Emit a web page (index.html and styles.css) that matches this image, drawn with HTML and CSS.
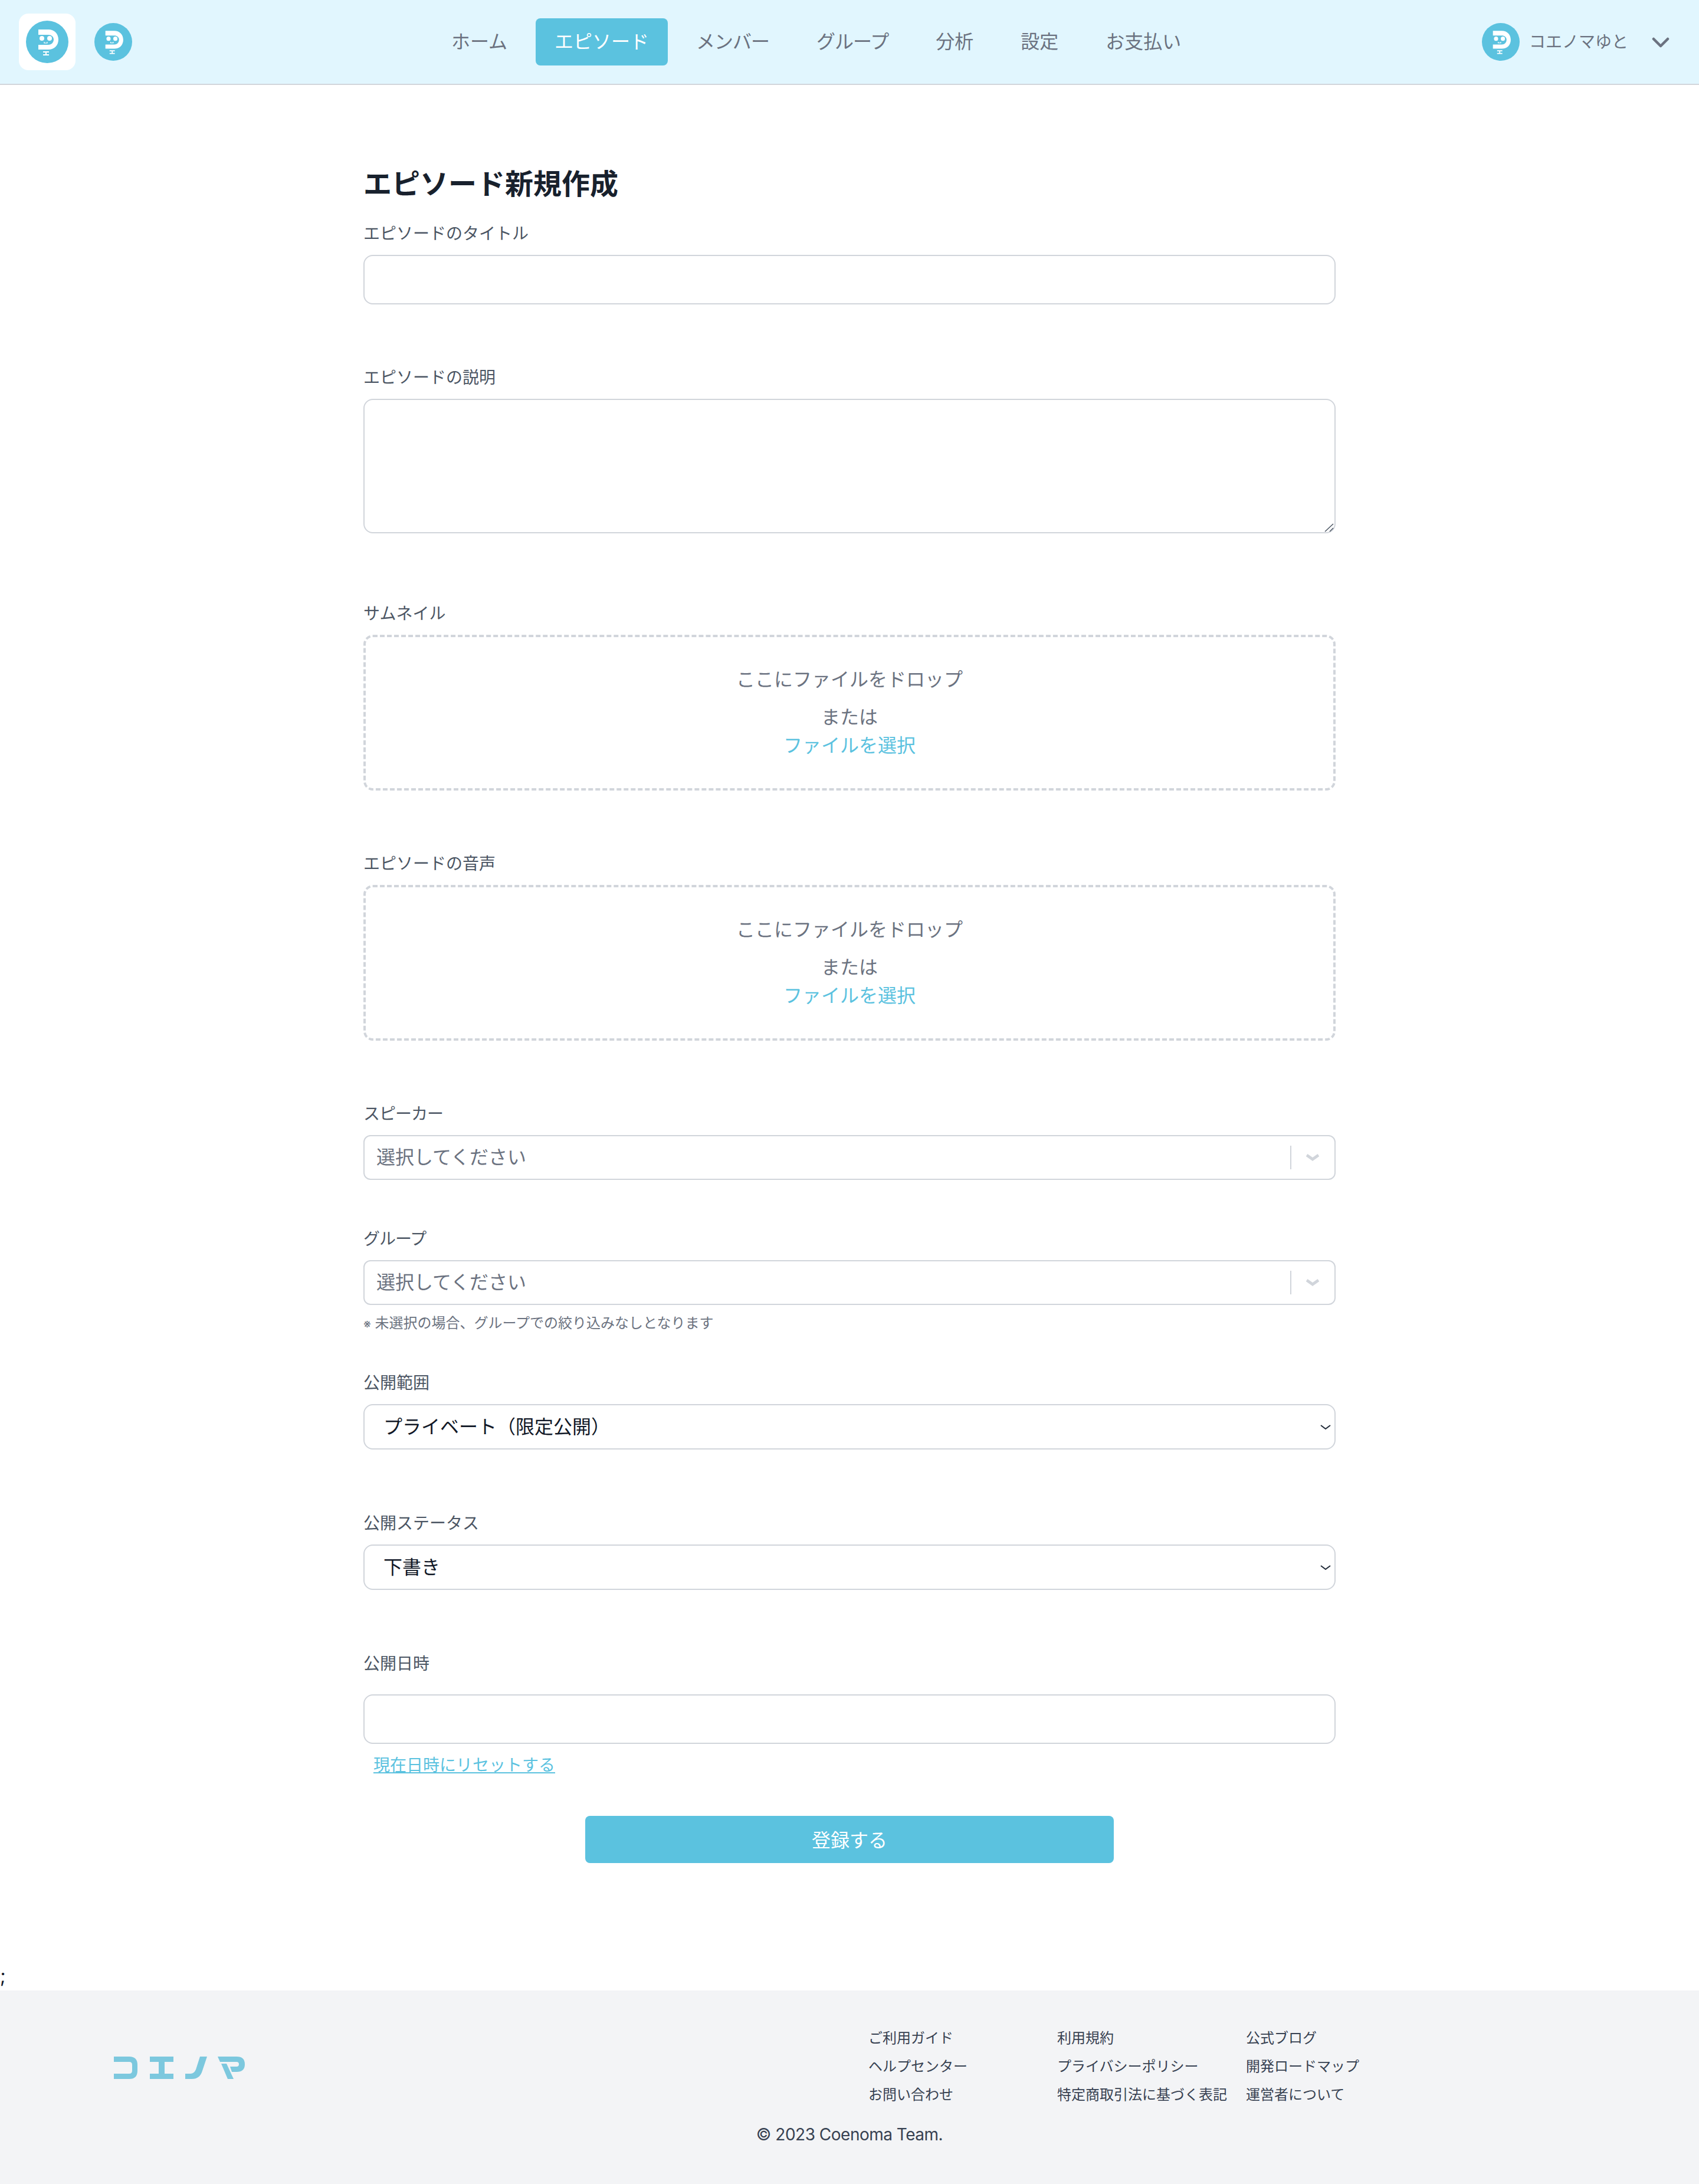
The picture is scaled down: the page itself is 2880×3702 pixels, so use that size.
FILE: index.html
```html
<!DOCTYPE html>
<html lang="ja">
<head>
  <meta charset="utf-8">
  <title>エピソード新規作成</title>
  <link rel="stylesheet" href="styles.css">
</head>
<body>
  <svg class="defs" width="0" height="0">
    <symbol id="mark" viewBox="0 0 72 72">
      <circle cx="36" cy="36" r="36" fill="#5bc2df"/>
      <path fill="#fff" d="M21 15H38C48 15 55 22 55 32C55 42 48 49 38 49H21V41H38C43 41 47 37 47 32C47 27 43 24 38 24H21Z"/>
      <circle cx="27" cy="30" r="4" fill="#fff"/>
      <circle cx="40" cy="30" r="4" fill="#fff"/>
      <path fill="none" stroke="#fff" stroke-width="1.2" d="M31 36v2h5v-2"/>
      <path fill="#fff" d="M29 52H39V54H35V57H39V59H29V57H33V54H29Z"/>
    </symbol>
  </svg>

  <header class="header">
    <div class="logo-card"><svg class="logo-card-mark"><use href="#mark"/></svg></div>
    <svg class="logo-small"><use href="#mark"/></svg>
    <nav class="nav">
      <a class="nav-item">ホーム</a>
      <a class="nav-item active">エピソード</a>
      <a class="nav-item tight">メンバー</a>
      <a class="nav-item tight">グループ</a>
      <a class="nav-item">分析</a>
      <a class="nav-item">設定</a>
      <a class="nav-item">お支払い</a>
    </nav>
    <div class="user-menu">
      <svg class="logo-small"><use href="#mark"/></svg>
      <span class="user-name">コエノマゆと</span>
      <svg class="user-chevron" viewBox="0 0 32 20"><path d="M3 3L15 15L27 3"/></svg>
    </div>
  </header>

  <main class="main">
    <h1 class="title">エピソード新規作成</h1>

    <div class="field">
      <label class="label">エピソードのタイトル</label>
      <input class="input" type="text">
    </div>

    <div class="field field-wide">
      <label class="label">エピソードの説明</label>
      <div class="textarea-wrap">
        <textarea class="textarea"></textarea>
        <svg class="textarea-grip" viewBox="0 0 16 16"><path d="M1 15L15 2M9 15L15 9"/></svg>
      </div>
    </div>

    <div class="field">
      <label class="label">サムネイル</label>
      <div class="dropzone">
        <p class="drop-text">ここにファイルをドロップ</p>
        <p class="drop-text">または</p>
        <a class="drop-link">ファイルを選択</a>
      </div>
    </div>

    <div class="field">
      <label class="label">エピソードの音声</label>
      <div class="dropzone">
        <p class="drop-text">ここにファイルをドロップ</p>
        <p class="drop-text">または</p>
        <a class="drop-link">ファイルを選択</a>
      </div>
    </div>

    <div class="field field-tight">
      <label class="label tight">スピーカー</label>
      <div class="combo">
        <span class="combo-placeholder">選択してください</span>
        <span class="combo-sep"></span>
        <svg class="combo-chevron" viewBox="0 0 22 14"><path d="M1 3L11 10L21 3"/></svg>
      </div>
    </div>

    <div class="field field-note">
      <label class="label tight">グループ</label>
      <div class="combo">
        <span class="combo-placeholder">選択してください</span>
        <span class="combo-sep"></span>
        <svg class="combo-chevron" viewBox="0 0 22 14"><path d="M1 3L11 10L21 3"/></svg>
      </div>
      <p class="note"><span class="note-mark">※</span> 未選択の場合、グループでの絞り込みなしとなります</p>
    </div>

    <div class="field field-select">
      <label class="label">公開範囲</label>
      <div class="select-wrap">
        <select class="select"><option>プライベート（限定公開）</option><option>パブリック</option></select>
        <svg class="select-chevron" viewBox="0 0 18 10"><path d="M1 2L9 8L17 2"/></svg>
      </div>
    </div>

    <div class="field field-select">
      <label class="label">公開ステータス</label>
      <div class="select-wrap">
        <select class="select"><option>下書き</option><option>公開</option></select>
        <svg class="select-chevron" viewBox="0 0 18 10"><path d="M1 2L9 8L17 2"/></svg>
      </div>
    </div>

    <div class="field-date">
      <label class="label label-date">公開日時</label>
      <input class="input" type="text">
      <a class="reset-link">現在日時にリセットする</a>
    </div>

    <button class="submit" type="button">登録する</button>
  </main>

  <div class="stray">;</div>

  <footer class="footer">
    <div class="footer-top">
      <svg class="footer-logo" viewBox="0 0 222 38">
        <path d="M0 0H26Q40 0 40 14V24Q40 38 26 38H0V29H26Q31 29 31 24V14Q31 9 26 9H0Z"/>
        <path d="M61 0H101V9H86V29H101V38H61V29H76V9H61Z"/>
        <path d="M121 38V29H130Q136 29 139 22L146 0H158L150 24Q146 38 132 38Z"/>
        <path d="M176 0H208Q222 0 222 13Q222 26 208 26H200L197 17H208Q212 17 212 13Q212 9 208 9H180Z"/>
        <path d="M182 12H191L203 38H193Z"/>
      </svg>
      <div class="footer-links">
        <a>ご利用ガイド</a>
        <a>利用規約</a>
        <a>公式ブログ</a>
        <a>ヘルプセンター</a>
        <a>プライバシーポリシー</a>
        <a>開発ロードマップ</a>
        <a>お問い合わせ</a>
        <a>特定商取引法に基づく表記</a>
        <a>運営者について</a>
      </div>
    </div>
    <p class="copyright">© 2023 Coenoma Team.</p>
  </footer>
</body>
</html>
```

FILE: styles.css
```css
* {
  box-sizing: border-box;
}
body {
  margin: 0;
  font-family: Inter, "Noto Sans CJK JP", sans-serif;
  color: #111827;
  background: #fff;
}
a {
  display: block;
}
.defs {
  position: absolute;
}

/* header */
.header {
  display: flex;
  align-items: center;
  height: 144px;
  padding: 0 48px 0 32px;
  background: #e1f6fe;
  border-bottom: 2px solid #d1d5db;
}
.logo-card {
  display: flex;
  align-items: center;
  justify-content: center;
  width: 96px;
  height: 96px;
  background: #fff;
  border-radius: 16px;
  margin-right: 32px;
}
.logo-card-mark {
  width: 72px;
  height: 72px;
}
.logo-small {
  width: 64px;
  height: 64px;
}
.nav {
  display: flex;
  gap: 16px;
  margin-left: 509px;
}
.nav-item {
  padding: 16px 32px;
  font-size: 32px;
  line-height: 48px;
  color: #6b7280;
  border-radius: 8px;
}
.nav-item.active {
  background: #5bc2df;
  color: #fff;
}
.tight {
  letter-spacing: -1px;
}
.user-menu {
  display: flex;
  align-items: center;
  margin-left: auto;
}
.user-name {
  margin-left: 16px;
  font-size: 28px;
  line-height: 40px;
  color: #6b7280;
}
.user-chevron {
  width: 32px;
  height: 20px;
  margin: 4px 0 0 40px;
  fill: none;
  stroke: #6b7280;
  stroke-width: 4.5;
  stroke-linecap: round;
  stroke-linejoin: round;
}

/* form */
.main {
  width: 1648px;
  margin: 0 auto;
  padding-top: 132px;
}
.title {
  margin: 0 0 28px;
  font-size: 48px;
  line-height: 72px;
  font-weight: 700;
  color: #18212d;
}
.field {
  margin-bottom: 104px;
}
.field-wide {
  margin-bottom: 116px;
}
.field-tight {
  margin-bottom: 80px;
}
.field-note {
  margin-bottom: 63px;
}
.field-select {
  margin-bottom: 105px;
}
.label {
  display: block;
  margin-bottom: 16px;
  font-size: 28px;
  line-height: 40px;
  color: #4b5563;
}
.label-date {
  margin-bottom: 32px;
}
.input,
.textarea {
  display: block;
  width: 100%;
  background: #fff;
  border: 2px solid #d1d5db;
  border-radius: 16px;
  font: inherit;
}
.input {
  height: 84px;
}
.textarea-wrap {
  position: relative;
}
.textarea {
  height: 228px;
  resize: none;
}
.textarea-grip {
  position: absolute;
  right: 3px;
  bottom: 2px;
  width: 16px;
  height: 16px;
  fill: none;
  stroke: #4b5563;
  stroke-width: 1.5;
}
.dropzone {
  height: 264px;
  padding: 48px;
  border: 4px dashed #d1d5db;
  border-radius: 16px;
  text-align: center;
  font-size: 32px;
  line-height: 48px;
}
.drop-text {
  margin: 0;
  color: #6b7280;
}
.drop-text:first-child {
  margin-bottom: 16px;
}
.drop-link {
  color: #5bc2df;
}
.combo {
  display: flex;
  align-items: center;
  height: 76px;
  padding-left: 20px;
  background: #fff;
  border: 2px solid #d1d5db;
  border-radius: 12px;
}
.combo-placeholder {
  flex: 1;
  font-size: 32px;
  line-height: 48px;
  color: #6b7280;
}
.combo-sep {
  width: 2px;
  height: 40px;
  background: #d1d5db;
}
.combo-chevron {
  width: 22px;
  height: 14px;
  margin: 0 26px 0 25px;
  fill: none;
  stroke: #d1d5db;
  stroke-width: 5;
}
.note {
  margin: 13px 0 0;
  font-size: 24px;
  line-height: 36px;
  color: #6b7280;
}
.note-mark {
  font-size: 20px;
  line-height: 1;
}
.select-wrap {
  position: relative;
}
.select {
  display: block;
  width: 100%;
  height: 77px;
  padding: 0 60px 0 32px;
  appearance: none;
  background: #fff;
  border: 2px solid #d1d5db;
  border-radius: 16px;
  font: inherit;
  font-size: 32px;
  color: #111827;
}
.select-chevron {
  position: absolute;
  right: 8px;
  top: 34px;
  width: 18px;
  height: 10px;
  fill: none;
  stroke: #1f2937;
  stroke-width: 2;
}
.reset-link {
  margin: 16px 0 0 17px;
  width: fit-content;
  font-size: 28px;
  line-height: 40px;
  color: #5bc2df;
  text-decoration: underline;
}
.submit {
  display: block;
  width: 896px;
  height: 80px;
  margin: 66px auto 0;
  padding: 0 0 2px;
  background: #5bc2df;
  border: 0;
  border-radius: 8px;
  font: inherit;
  font-size: 32px;
  color: #fff;
}
.stray {
  margin-top: 168px;
  font-size: 32px;
  line-height: 48px;
}

/* footer */
.footer {
  height: 328px;
  padding-top: 63px;
  background: #f3f4f6;
}
.footer-top {
  display: grid;
  grid-template-columns: 1279px auto;
  padding-left: 193px;
}
.footer-logo {
  width: 222px;
  height: 38px;
  margin-top: 49px;
  fill: #7cc8de;
}
.footer-links {
  display: grid;
  grid-template-columns: repeat(3, 288px);
  column-gap: 32px;
  row-gap: 12px;
  font-size: 24px;
  line-height: 36px;
  color: #374151;
}
.copyright {
  margin: 29px 0 0;
  text-align: center;
  font-size: 28px;
  line-height: 40px;
  letter-spacing: -0.5px;
  color: #374151;
}
```
